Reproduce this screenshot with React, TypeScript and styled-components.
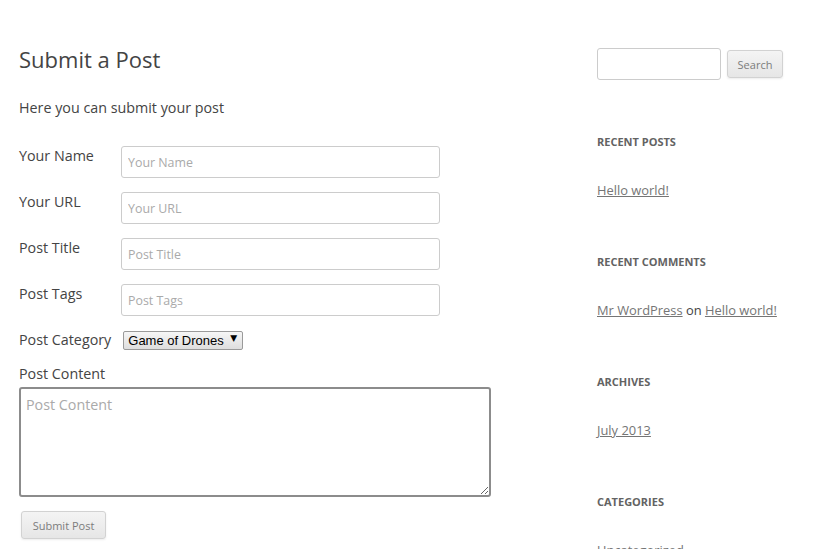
import React from "react";
import styled, { createGlobalStyle } from "styled-components";

const Global = createGlobalStyle`
  html, body { margin: 0; padding: 0; background: #fff; }
  body { font-family: "Open Sans", "Liberation Sans", sans-serif; color: #444; font-size: 14px; }
  * { box-sizing: border-box; }
  input::placeholder, textarea::placeholder { color: #aaa; opacity: 1; }
`;

const Page = styled.div`
  display: flex;
  align-items: flex-start;
  width: 814px;
  height: 549px;
  overflow: hidden;
`;

const Main = styled.main`
  width: 578px;
  padding: 44px 0 0 19px;
`;

const Title = styled.h1`
  margin: 0;
  font-size: 22px;
  font-weight: 400;
  line-height: 30px;
  color: #444;
`;

const Intro = styled.p`
  margin: 22px 0 26px;
  font-size: 14.3px;
  line-height: 24px;
`;

const Form = styled.form`
  display: flex;
  flex-direction: column;
`;

const Row = styled.div`
  display: flex;
  align-items: flex-start;
  margin-bottom: 14px;
`;

const Label = styled.label`
  width: 102px;
  margin-top: -2px;
  font-size: 14.3px;
  line-height: 24px;
  flex-shrink: 0;
`;

const TextInput = styled.input`
  width: 319px;
  height: 32px;
  border: 1px solid #ccc;
  border-radius: 3px;
  padding: 0 6px;
  font-family: "Open Sans", sans-serif;
  font-size: 12.4px;
  color: #444;
  outline: none;
`;

const CategoryRow = styled.div`
  display: flex;
  align-items: center;
  margin-top: -2px;
  margin-bottom: 10px;
`;

const CategoryLabel = styled.label`
  font-size: 14.3px;
  line-height: 24px;
  margin-right: 12px;
`;

const SelectWrap = styled.div`
  position: relative;
  width: 120px;
  height: 19px;
  margin-bottom: 2px;
  &::after {
    content: "▼";
    position: absolute;
    right: 6px;
    top: 3px;
    font-size: 9px;
    line-height: 11px;
    color: #000;
    pointer-events: none;
    font-family: "DejaVu Sans", sans-serif;
  }
`;

const Select = styled.select`
  appearance: none;
  -webkit-appearance: none;
  width: 100%;
  height: 100%;
  border: 1px solid #9a9a9a;
  border-radius: 2px;
  background: linear-gradient(#f6f6f6, #dedede);
  font-family: "Liberation Sans", Arial, sans-serif;
  font-size: 13px;
  color: #000;
  padding: 0 0 0 4px;
  outline: none;
`;

const ContentLabel = styled.label`
  font-size: 14.3px;
  line-height: 24px;
  margin-bottom: 1px;
`;

const TextArea = styled.textarea`
  width: 472px;
  height: 110px;
  border: 2px solid #8c8c8c;
  border-radius: 3px;
  padding: 4px 6px 5px 5px;
  font-family: "Open Sans", sans-serif;
  font-size: 14.3px;
  line-height: 24px;
  color: #444;
  outline: none;
  display: block;
`;

const Button = styled.button<{ $w: number; $h: number }>`
  width: ${(p) => p.$w}px;
  height: ${(p) => p.$h}px;
  padding: 0;
  font-family: "Open Sans", sans-serif;
  font-size: 11px;
  color: #7c7c7c;
  background: linear-gradient(#f4f4f4, #e6e6e6);
  border: 1px solid #d2d2d2;
  border-radius: 3px;
  box-shadow: 0 1px 2px rgba(64, 64, 64, 0.1);
`;

const SubmitWrap = styled.div`
  margin: 14px 0 0 2px;
`;

const Sidebar = styled.aside`
  padding: 48px 0 0 19px;
  width: 236px;
`;

const SearchRow = styled.div`
  display: flex;
  align-items: center;
  gap: 6px;
  margin-bottom: 50px;
`;

const SearchInput = styled.input`
  width: 124px;
  height: 32px;
  border: 1px solid #ccc;
  border-radius: 3px;
  outline: none;
`;

const Widget = styled.section`
  margin-bottom: 48px;
`;

const WidgetTitle = styled.h3`
  margin: 0 0 24px;
  font-size: 11px;
  font-weight: 700;
  line-height: 24px;
  text-transform: uppercase;
  color: #636363;
`;

const WidgetText = styled.div`
  font-size: 12.9px;
  line-height: 24px;
  color: #444;
  white-space: nowrap;
`;

const Link = styled.a`
  color: #757575;
  text-decoration: underline;
`;

export default function App() {
  return (
    <>
      <Global />
      <Page>
        <Main>
          <Title>Submit a Post</Title>
          <Intro>Here you can submit your post</Intro>
          <Form>
            <Row>
              <Label>Your Name</Label>
              <TextInput placeholder="Your Name" />
            </Row>
            <Row>
              <Label>Your URL</Label>
              <TextInput placeholder="Your URL" />
            </Row>
            <Row>
              <Label>Post Title</Label>
              <TextInput placeholder="Post Title" />
            </Row>
            <Row>
              <Label>Post Tags</Label>
              <TextInput placeholder="Post Tags" />
            </Row>
            <CategoryRow>
              <CategoryLabel>Post Category</CategoryLabel>
              <SelectWrap>
                <Select defaultValue="drones">
                  <option value="drones">Game of Drones</option>
                </Select>
              </SelectWrap>
            </CategoryRow>
            <ContentLabel>Post Content</ContentLabel>
            <TextArea placeholder="Post Content" />
            <SubmitWrap>
              <Button type="button" $w={85} $h={28}>Submit Post</Button>
            </SubmitWrap>
          </Form>
        </Main>
        <Sidebar>
          <SearchRow>
            <SearchInput />
            <Button type="button" $w={56} $h={28}>Search</Button>
          </SearchRow>
          <Widget>
            <WidgetTitle>Recent Posts</WidgetTitle>
            <WidgetText><Link href="#">Hello world!</Link></WidgetText>
          </Widget>
          <Widget>
            <WidgetTitle>Recent Comments</WidgetTitle>
            <WidgetText>
              <Link href="#">Mr WordPress</Link> on <Link href="#">Hello world!</Link>
            </WidgetText>
          </Widget>
          <Widget>
            <WidgetTitle>Archives</WidgetTitle>
            <WidgetText><Link href="#">July 2013</Link></WidgetText>
          </Widget>
          <Widget>
            <WidgetTitle>Categories</WidgetTitle>
            <WidgetText><Link href="#">Uncategorized</Link></WidgetText>
          </Widget>
        </Sidebar>
      </Page>
    </>
  );
}
